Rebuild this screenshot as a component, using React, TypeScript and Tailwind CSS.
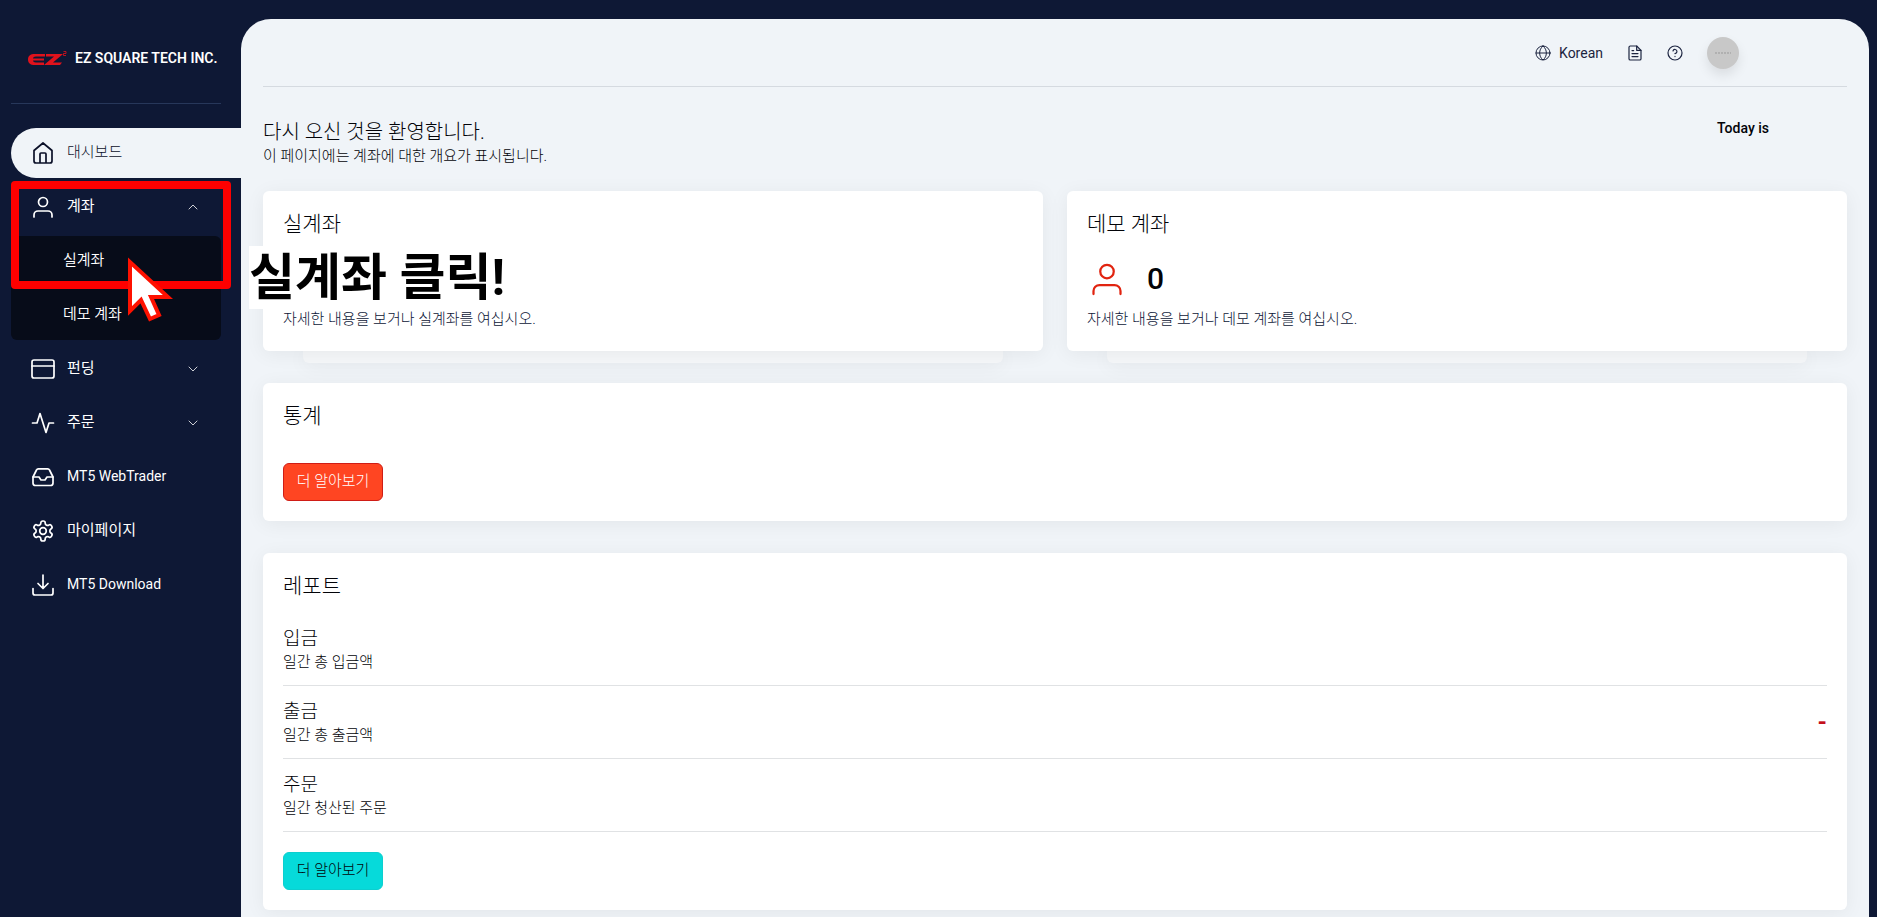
import { useState } from 'react'
import type { ReactNode } from 'react'
import { ChevronDown, ChevronUp } from 'lucide-react'

const iconPaths: Record<string, ReactNode> = {
  home: (
    <path d="M3 9.5 12 2l9 7.5V20a2 2 0 0 1-2 2H5a2 2 0 0 1-2-2zM9 22v-9a1 1 0 0 1 1-1h4a1 1 0 0 1 1 1v9" />
  ),
  user: (
    <>
      <circle cx="12" cy="7" r="4.5" />
      <path d="M3 22v-2a4 4 0 0 1 4-4h10a4 4 0 0 1 4 4v2" />
    </>
  ),
  card: (
    <>
      <rect x="1" y="3" width="22" height="18" rx="2" />
      <path d="M1 9h22" />
    </>
  ),
  activity: <path d="M22.5 12H18l-3 9.5L9 2.5 6 12H1.5" />,
  inbox: (
    <>
      <path d="M22 12h-6l-2 3h-4l-2-3H2" />
      <path d="M5.5 5 2 12v6a2.5 2.5 0 0 0 2.5 2.5h15A2.5 2.5 0 0 0 22 18v-6l-3.5-7a2 2 0 0 0-1.8-1.2H7.3A2 2 0 0 0 5.5 5z" />
    </>
  ),
  settings: (
    <>
      <circle cx="12" cy="12" r="3.3" />
      <path d="M12.22 2h-.44a2 2 0 0 0-2 2v.18a2 2 0 0 1-1 1.73l-.43.25a2 2 0 0 1-2 0l-.15-.08a2 2 0 0 0-2.73.73l-.22.38a2 2 0 0 0 .73 2.73l.15.1a2 2 0 0 1 1 1.72v.51a2 2 0 0 1-1 1.74l-.15.09a2 2 0 0 0-.73 2.73l.22.38a2 2 0 0 0 2.73.73l.15-.08a2 2 0 0 1 2 0l.43.25a2 2 0 0 1 1 1.73V20a2 2 0 0 0 2 2h.44a2 2 0 0 0 2-2v-.18a2 2 0 0 1 1-1.73l.43-.25a2 2 0 0 1 2 0l.15.08a2 2 0 0 0 2.73-.73l.22-.39a2 2 0 0 0-.73-2.73l-.15-.08a2 2 0 0 1-1-1.74v-.5a2 2 0 0 1 1-1.74l.15-.09a2 2 0 0 0 .73-2.73l-.22-.38a2 2 0 0 0-2.73-.73l-.15.08a2 2 0 0 1-2 0l-.43-.25a2 2 0 0 1-1-1.73V4a2 2 0 0 0-2-2z" />
    </>
  ),
  download: <path d="M2 15.5V20a2 2 0 0 0 2 2h16a2 2 0 0 0 2-2v-4.5M7 10.5l5 5 5-5M12 15V2" />,
  globe: (
    <>
      <circle cx="12" cy="12" r="10.5" />
      <path d="M1.5 12h21M12 1.5c3.5 3 5 6.500 5 10.500s-1.500 7.500-5 10.500C8.500 19.500 7 16 7 12s1.500-7.500 5-10.500z" />
    </>
  ),
  file: (
    <>
      <path d="M14.5 1.5H5a2 2 0 0 0-2 2v17a2 2 0 0 0 2 2h14a2 2 0 0 0 2-2V8z" />
      <path d="M14.5 1.5V8H21M16.5 12.8h-9M16.5 17.3h-9M10 8.3H7.5" />
    </>
  ),
  help: (
    <>
      <circle cx="12" cy="12" r="10.5" />
      <path d="M9 9a3 3 0 0 1 5.9 1c0 2-2.9 3-2.9 3M12 17.2v.1" />
    </>
  ),
}

function Icon({ name, className }: { name: string; className: string }) {
  return (
    <svg
      viewBox="0 0 24 24"
      fill="none"
      stroke="currentColor"
      strokeLinecap="round"
      strokeLinejoin="round"
      className={className}
      aria-hidden="true"
    >
      {iconPaths[name]}
    </svg>
  )
}

const menu = [
  { icon: 'home', label: '대시보드', active: true },
  { icon: 'user', label: '계좌', children: ['실계좌', '데모 계좌'] },
  { icon: 'card', label: '펀딩', children: [] },
  { icon: 'activity', label: '주문', children: [] },
  { icon: 'inbox', label: 'MT5 WebTrader', latin: true },
  { icon: 'settings', label: '마이페이지' },
  { icon: 'download', label: 'MT5 Download', latin: true },
]

const reports = [
  { title: '입금', text: '일간 총 입금액', value: '' },
  { title: '출금', text: '일간 총 출금액', value: '-' },
  { title: '주문', text: '일간 청산된 주문', value: '' },
]

function Logo() {
  return (
    <svg viewBox="0 0 40 16" className="h-4 w-10 shrink-0" fill="#e0121c" aria-label="EZ">
      <path d="M18 4H8C3 4 1 6 1 9.500S3 15 8 15h9v-2.500H9c-2 0-2.800-.800-3-2h11V8.500H6c.200-1.200 1-2 3-2h9z" />
      <path d="M19 4h17l-10 8.500h9L33 15H17l10-8.500h-8z" />
      <path d="M36.500 1.500H39v2h-2.500v2H39" fill="none" stroke="#e0121c" strokeWidth="0.800" />
    </svg>
  )
}

function Sidebar() {
  const [open, setOpen] = useState('계좌')

  return (
    <aside className="w-[241px] shrink-0 pl-[11px] text-white">
      <div className="mr-5 flex h-[104px] items-center gap-2 border-b border-[#27375a] pl-4 pt-3">
        <Logo />
        <span className="whitespace-nowrap text-sm font-semibold">EZ SQUARE TECH INC.</span>
      </div>
      <nav className="mt-6 flex flex-col gap-1">
        {menu.map((item) => (
          <div key={item.label} className="relative flex flex-col gap-1">
            <button
              type="button"
              onClick={() => item.children && setOpen(open === item.label ? '' : item.label)}
              className={
                item.active
                  ? 'flex h-[50px] items-center rounded-l-full bg-[#f0f4f8] pl-5 text-left font-light text-[#0b1028]'
                  : 'mr-5 flex h-[50px] items-center pl-5 text-left'
              }
            >
              <Icon name={item.icon} className="mr-3 size-6 stroke-[1.7]" />
              <span className={item.latin ? 'grow pb-0.5 text-sm' : 'grow pb-0.5 text-[15px]'}>{item.label}</span>
              {item.children &&
                (open === item.label ? (
                  <ChevronUp className="mr-5 size-4 stroke-[1.2]" />
                ) : (
                  <ChevronDown className="mr-5 size-4 stroke-[1.2]" />
                ))}
            </button>
            {open === item.label && item.children && (
              <div className="mr-5 flex h-[104px] flex-col rounded-md bg-[#070c19]">
                {item.children.map((child) => (
                  <a
                    key={child}
                    href="#"
                    className="flex h-[54px] shrink-0 items-center pb-1.5 pl-[52px] text-[15px] font-[350]"
                  >
                    {child}
                  </a>
                ))}
              </div>
            )}
            {item.label === '계좌' && <Annotation />}
          </div>
        ))}
      </nav>
    </aside>
  )
}

// tutorial marks laid over the account menu
function Annotation() {
  return (
    <>
      <div className="pointer-events-none absolute -top-px left-0 h-[108px] w-[220px] rounded border-8 border-[#fe0000]" />
      <svg
        viewBox="0 0 46 66"
        className="pointer-events-none absolute left-[116px] top-[74px] h-[66px] w-[46px]"
        fill="white"
        stroke="#fe1100"
        strokeWidth="4"
        aria-hidden="true"
      >
        <path d="M3 6v49l11-11 9 19 9-4-8-18h17z" />
      </svg>
      <p className="pointer-events-none absolute left-[238px] top-[64px] z-10 h-[63px] whitespace-nowrap bg-white text-[50px]/[64px] font-bold text-black">
        실계좌 클릭!
      </p>
    </>
  )
}

function Header() {
  return (
    <header className="flex h-[68px] items-center justify-end border-b border-[#d5dae0] pr-[108px] text-[#1c2440]">
      <button type="button" className="flex items-center gap-2 text-sm">
        <Icon name="globe" className="size-4 stroke-[1.5]" />
        <span>Korean</span>
      </button>
      <button type="button" aria-label="Documents" className="ml-6">
        <Icon name="file" className="size-4 stroke-[1.8]" />
      </button>
      <button type="button" aria-label="Help" className="ml-6">
        <Icon name="help" className="size-4 stroke-[1.8]" />
      </button>
      <button
        type="button"
        aria-label="Profile"
        className="ml-6 flex size-8 items-center justify-center rounded-full bg-[#c8c8c8] shadow-[0_6px_12px_#00000018]"
      >
        <svg viewBox="0 0 16 4" className="h-1 w-4" stroke="#999" fill="none" aria-hidden="true">
          <path d="M0 2h16" strokeDasharray="2 1" />
        </svg>
      </button>
    </header>
  )
}

function AccountCard({ title, text, count }: { title: string; text: string; count?: number }) {
  return (
    <section className="relative grow basis-0">
      <div className="absolute inset-x-10 top-full h-3 rounded-b-md bg-[#f5f7f9] shadow-[0_3px_20px_#0000000f]" />
      <div className="relative h-40 rounded-md bg-white px-5 pt-[18px] shadow-[0_3px_20px_#0000000f]">
        <h2 className="text-[21px]/[30px] font-light">{title}</h2>
        <div className="mt-[18px] flex h-11 items-center gap-5">
          {count !== undefined && (
            <>
              <Icon name="user" className="mx-0.5 size-9 stroke-[1.5] text-[#e12410]" />
              <span className="text-3xl font-medium">{count}</span>
            </>
          )}
        </div>
        <p className="mt-2 text-[15px]/5 font-light text-[#0c1536]">{text}</p>
      </div>
    </section>
  )
}

export default function App() {
  return (
    <div className="flex min-h-screen bg-[#0e1835] font-[Roboto,'Noto_Sans_CJK_KR',sans-serif] text-[#020308]">
      <Sidebar />
      <main className="mr-2 mt-[19px] grow rounded-t-[30px] bg-[#f0f4f8] px-[22px] pb-[7px]">
        <Header />
        <div className="flex h-[104px] justify-between pr-[78px] pt-[31px]">
          <div>
            <h1 className="text-xl/7 font-light">다시 오신 것을 환영합니다.</h1>
            <p className="text-[15px]/5 font-light">이 페이지에는 계좌에 대한 개요가 표시됩니다.</p>
          </div>
          <p className="text-sm font-medium">Today is</p>
        </div>
        <div className="flex gap-6">
          <AccountCard title="실계좌" text="자세한 내용을 보거나 실계좌를 여십시오." />
          <AccountCard title="데모 계좌" text="자세한 내용을 보거나 데모 계좌를 여십시오." count={0} />
        </div>
        <section className="mt-8 rounded-md bg-white p-5 pt-[18px] shadow-[0_3px_20px_#0000000f]">
          <h2 className="text-[21px]/[30px] font-light">통계</h2>
          <button
            type="button"
            className="mt-8 block h-[38px] w-[100px] rounded-md border border-[#cf1d16] bg-[#ff4522] pb-0.5 text-[15px] font-light text-white"
          >
            더 알아보기
          </button>
        </section>
        <section className="mt-8 rounded-md bg-white p-5 pt-[18px] shadow-[0_3px_20px_#0000000f]">
          <h2 className="mb-3 text-[21px]/[30px] font-light">레포트</h2>
          {reports.map((report) => (
            <div key={report.title} className="flex h-[73px] items-center justify-between border-b border-[#e0e2e4]">
              <div>
                <h3 className="text-[19px]/[26px] font-light">{report.title}</h3>
                <p className="text-[15px]/5 font-light">{report.text}</p>
              </div>
              <span className="text-2xl font-bold text-[#c4101c]">{report.value}</span>
            </div>
          ))}
          <button
            type="button"
            className="mt-5 block h-[38px] w-[100px] rounded-md border border-[#0ccfcf] bg-[#06dada] pb-0.5 text-[15px] font-light"
          >
            더 알아보기
          </button>
        </section>
      </main>
    </div>
  )
}
